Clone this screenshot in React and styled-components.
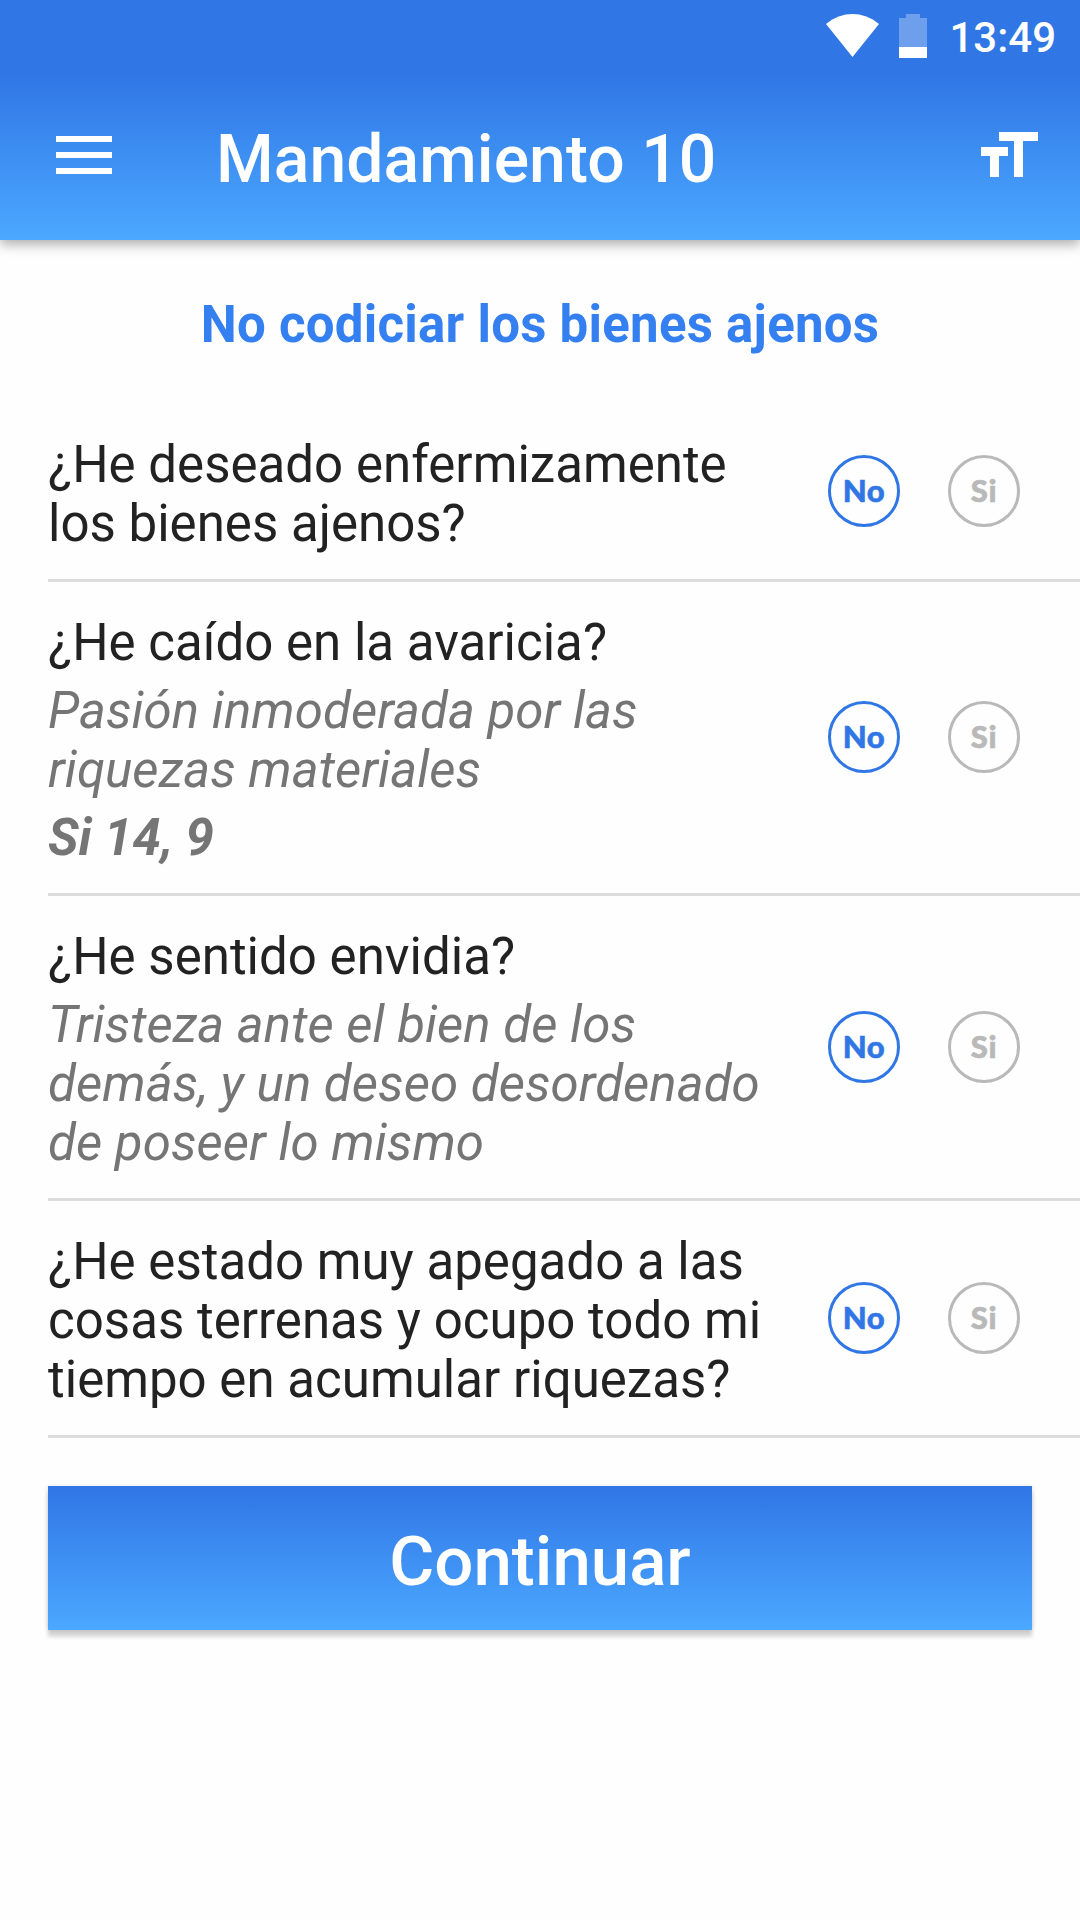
import React, { useState } from "react";
import styled, { createGlobalStyle } from "styled-components";

const GlobalStyle = createGlobalStyle`
  * {
    box-sizing: border-box;
  }

  body {
    margin: 0;
    background-color: #fefefe;
    font-family: Roboto, "Liberation Sans", sans-serif;
  }

  button {
    font-family: inherit;
    padding: 0;
    border: none;
    background: none;
  }
`;

const Page = styled.div`
  display: flex;
  flex-direction: column;
  width: 1080px;
  height: 1920px;
  overflow: hidden;
  background-color: #fefefe;
`;

const Header = styled.header`
  flex: none;
  height: 240px;
  color: #fff;
  background: linear-gradient(#3076e5 72px, #4ba8ff 240px);
  box-shadow: 0 5px 11px rgba(0, 0, 0, 0.3);
`;

const StatusBar = styled.div`
  display: flex;
  justify-content: flex-end;
  height: 72px;
  padding: 14px 24px 0 0;
`;

const Time = styled.div`
  margin-left: 22px;
  font-size: 42px;
  font-weight: 500;
  line-height: 48px;
`;

const WifiIcon = styled.svg`
  width: 53px;
  height: 43px;
  margin-right: 20px;
`;

const BatteryIcon = styled.svg`
  width: 28px;
  height: 44px;
`;

const Toolbar = styled.div`
  display: flex;
  height: 168px;
  padding: 0 42px 0 56px;
`;

const MenuButton = styled.button`
  display: flex;
  flex-direction: column;
  gap: 10px;
  width: 56px;
  margin-top: 64px;
`;

const MenuLine = styled.span`
  width: 56px;
  height: 6px;
  background-color: #fff;
`;

const Title = styled.h1`
  flex: 1;
  margin: 49px 0 0 104px;
  font-size: 66px;
  font-weight: 500;
  line-height: 78px;
  letter-spacing: 0.08px;
`;

const SizeButton = styled.button`
  width: 57px;
  height: 45px;
  margin-top: 60px;

  & > svg {
    display: block;
  }
`;

const SubTitle = styled.h2`
  margin: 55px 0 49px;
  text-align: center;
  font-size: 51px;
  font-weight: 700;
  line-height: 60px;
  letter-spacing: 0.25px;
  color: #3580f0;
`;

const List = styled.div`
  margin-left: 48px;
`;

const Row = styled.div`
  display: flex;
  align-items: center;
  padding-right: 60px;
  border-bottom: 3px solid #dcdcdc;
`;

const Texts = styled.div`
  flex: 1;
  padding: 31px 0 26px;
  font-size: 51px;
  line-height: 59px;
`;

const Question = styled.div`
  letter-spacing: 0.02px;
  color: #222;
`;

const Description = styled.div`
  margin-top: 9px;
  font-style: italic;
  letter-spacing: 0.05px;
  color: #757575;
`;

const Quote = styled(Description)`
  font-weight: 700;
  letter-spacing: 0;
`;

const Answers = styled.div`
  display: flex;
  gap: 48px;
  margin-top: -1px;
`;

const Answer = styled.button`
  width: 72px;
  height: 72px;
  padding-bottom: 2px;
  border: 3px solid;
  border-radius: 50%;
  font-family: Lato, "Liberation Sans", sans-serif;
  font-size: 31px;
  font-weight: 900;
  line-height: 40px;
  letter-spacing: 0.6px;
  -webkit-text-stroke: 0.6px;
  color: ${({ $active }) => ($active ? "#3076e5" : "#b9b9b9")};
`;

const Continue = styled.button`
  flex: none;
  height: 144px;
  margin: 48px 48px 0;
  padding-top: 7px;
  font-size: 69px;
  font-weight: 500;
  line-height: 80px;
  color: #fff;
  background: linear-gradient(#3076e5, #4ba8ff);
  box-shadow: 0 7px 4px rgba(0, 0, 0, 0.15), 0 1px 5px rgba(0, 0, 0, 0.14);
`;

const questions = [
  { lines: ["¿He deseado enfermizamente", "los bienes ajenos?"] },
  {
    lines: ["¿He caído en la avaricia?"],
    description: ["Pasión inmoderada por las", "riquezas materiales"],
    quote: "Si 14, 9",
  },
  {
    lines: ["¿He sentido envidia?"],
    description: [
      "Tristeza ante el bien de los",
      "demás, y un deseo desordenado",
      "de poseer lo mismo",
    ],
  },
  {
    lines: [
      "¿He estado muy apegado a las",
      "cosas terrenas y ocupo todo mi",
      "tiempo en acumular riquezas?",
    ],
  },
];

const Lines = ({ lines }) => lines.map((line) => <div key={line}>{line}</div>);

const App = () => {
  const [answers, setAnswers] = useState(questions.map(() => false));

  const setAnswer = (index, value) => {
    setAnswers(answers.map((a, i) => (i === index ? value : a)));
  };

  return (
    <Page>
      <GlobalStyle />
      <Header>
        <StatusBar>
          <WifiIcon viewBox="0 0 53 43">
            <path d="M0 10C16-3.300 37-3.300 53 10L26.500 43Z" fill="#fff" />
          </WifiIcon>
          <BatteryIcon viewBox="0 0 28 44">
            <path d="M0 4h7V0h14v4h7v29H0z" fill="#fff" opacity="0.3" />
            <path d="M0 33h28v11H0z" fill="#fff" />
          </BatteryIcon>
          <Time>13:49</Time>
        </StatusBar>
        <Toolbar>
          <MenuButton>
            <MenuLine />
            <MenuLine />
            <MenuLine />
          </MenuButton>
          <Title>Mandamiento 10</Title>
          <SizeButton>
            <svg width="57" height="45" viewBox="0 0 57 45">
              <path d="M18 0h39v9H42v36h-9V9H18z" fill="#fff" />
              <path d="M0 15h27v9h-9v21H9V24H0z" fill="#fff" />
            </svg>
          </SizeButton>
        </Toolbar>
      </Header>
      <SubTitle>No codiciar los bienes ajenos</SubTitle>
      <List>
        {questions.map((q, i) => (
          <Row key={i}>
            <Texts>
              <Question>
                <Lines lines={q.lines} />
              </Question>
              {q.description && (
                <Description>
                  <Lines lines={q.description} />
                </Description>
              )}
              {q.quote && <Quote>{q.quote}</Quote>}
            </Texts>
            <Answers>
              <Answer $active={!answers[i]} onClick={() => setAnswer(i, false)}>
                No
              </Answer>
              <Answer $active={answers[i]} onClick={() => setAnswer(i, true)}>
                Si
              </Answer>
            </Answers>
          </Row>
        ))}
      </List>
      <Continue>Continuar</Continue>
    </Page>
  );
};
export default App;
